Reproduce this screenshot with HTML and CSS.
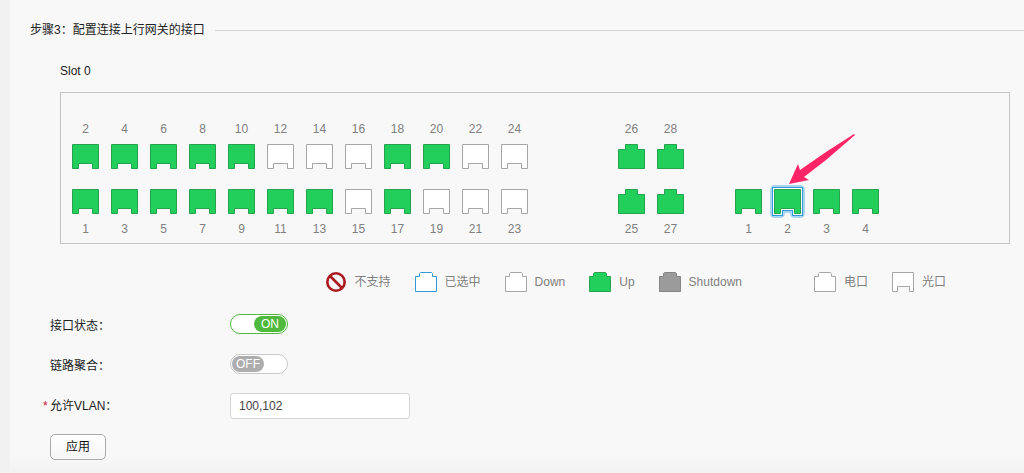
FILE: index.html
```html
<!DOCTYPE html>
<html lang="zh-CN">
<head>
  <meta charset="UTF-8">
  <meta name="viewport" content="width=device-width, initial-scale=1.0">
  <title>配置连接上行网关的接口</title>
  <link rel="stylesheet" href="styles.css">
</head>
<body>

  <!-- port shapes -->
  <svg class="sprite" aria-hidden="true">
    <symbol id="fiber" viewBox="0 0 27 25"><path d="M.5.5h26v24h-6v-5h-14v5h-6z"/></symbol>
    <symbol id="copper" viewBox="0 0 27 25"><path d="M.5 5.5h7v-5h12v5h7v19h-26z"/></symbol>
    <symbol id="fiber-sm" viewBox="0 0 22 20"><path d="M.5.5h21v19h-4v-5h-12v5h-5z"/></symbol>
    <symbol id="copper-sm" viewBox="0 0 22 20"><path d="M.5 4.5h4v-3l1-1h11l1 1v3h4v15h-21z"/></symbol>
  </svg>

  <main class="content">
    <h2 class="step-title">步骤3：配置连接上行网关的接口</h2>

    <section class="slot">
      <h3 class="slot-name">Slot 0</h3>
      <div class="panel">
        <div class="group">
          <div class="row">
            <button class="port up">2<svg><use href="#fiber"/></svg></button>
            <button class="port up">4<svg><use href="#fiber"/></svg></button>
            <button class="port up">6<svg><use href="#fiber"/></svg></button>
            <button class="port up">8<svg><use href="#fiber"/></svg></button>
            <button class="port up">10<svg><use href="#fiber"/></svg></button>
            <button class="port">12<svg><use href="#fiber"/></svg></button>
            <button class="port">14<svg><use href="#fiber"/></svg></button>
            <button class="port">16<svg><use href="#fiber"/></svg></button>
            <button class="port up">18<svg><use href="#fiber"/></svg></button>
            <button class="port up">20<svg><use href="#fiber"/></svg></button>
            <button class="port">22<svg><use href="#fiber"/></svg></button>
            <button class="port">24<svg><use href="#fiber"/></svg></button>
          </div>
          <div class="row">
            <button class="port up"><svg><use href="#fiber"/></svg>1</button>
            <button class="port up"><svg><use href="#fiber"/></svg>3</button>
            <button class="port up"><svg><use href="#fiber"/></svg>5</button>
            <button class="port up"><svg><use href="#fiber"/></svg>7</button>
            <button class="port up"><svg><use href="#fiber"/></svg>9</button>
            <button class="port up"><svg><use href="#fiber"/></svg>11</button>
            <button class="port up"><svg><use href="#fiber"/></svg>13</button>
            <button class="port"><svg><use href="#fiber"/></svg>15</button>
            <button class="port up"><svg><use href="#fiber"/></svg>17</button>
            <button class="port"><svg><use href="#fiber"/></svg>19</button>
            <button class="port"><svg><use href="#fiber"/></svg>21</button>
            <button class="port"><svg><use href="#fiber"/></svg>23</button>
          </div>
        </div>

        <div class="group combo">
          <div class="row">
            <button class="port up">26<svg><use href="#copper"/></svg></button>
            <button class="port up">28<svg><use href="#copper"/></svg></button>
          </div>
          <div class="row">
            <button class="port up"><svg><use href="#copper"/></svg>25</button>
            <button class="port up"><svg><use href="#copper"/></svg>27</button>
          </div>
        </div>

        <div class="group uplink">
          <div class="row">
            <button class="port up"><svg><use href="#fiber"/></svg>1</button>
            <button class="port up selected" aria-pressed="true">
              <svg viewBox="0 0 27 25">
                <path class="halo" d="M.5.5h26v24h-6v-5h-14v5h-6z"/>
                <path class="ring" d="M.5.5h26v24h-6v-5h-14v5h-6z"/>
                <path class="gap" d="M.5.5h26v24h-6v-5h-14v5h-6z"/>
                <path d="M.5.5h26v24h-6v-5h-14v5h-6z"/>
              </svg>2
            </button>
            <button class="port up"><svg><use href="#fiber"/></svg>3</button>
            <button class="port up"><svg><use href="#fiber"/></svg>4</button>
          </div>
          <svg class="arrow" viewBox="0 0 66 52" aria-hidden="true">
            <path d="M65 1 37 19 11 37 9 31 0 51l20-4-5-3 22-17L66 2z"/>
          </svg>
        </div>
      </div>

      <ul class="legend">
        <li>
          <svg class="forbid" viewBox="0 0 22 22"><circle cx="11" cy="11" r="8.7"/><path d="M5 5l12 12"/></svg>
          不支持
        </li>
        <li><svg class="chosen"><use href="#copper-sm"/></svg>已选中</li>
        <li><svg><use href="#copper-sm"/></svg>Down</li>
        <li><svg class="up"><use href="#copper-sm"/></svg>Up</li>
        <li><svg class="shutdown"><use href="#copper-sm"/></svg>Shutdown</li>
        <li class="type"><svg><use href="#copper-sm"/></svg>电口</li>
        <li><svg><use href="#fiber-sm"/></svg>光口</li>
      </ul>
    </section>

    <form class="settings">
      <div class="field">
        <label for="status">接口状态：</label>
        <span class="switch">
          <input type="checkbox" id="status" checked>
          <span class="knob"></span>
        </span>
      </div>
      <div class="field">
        <label for="trunk">链路聚合：</label>
        <span class="switch">
          <input type="checkbox" id="trunk">
          <span class="knob"></span>
        </span>
      </div>
      <div class="field required">
        <label for="vlan">允许VLAN：</label>
        <input class="text" type="text" id="vlan" value="100,102">
      </div>
      <button class="apply" type="button">应用</button>
    </form>
  </main>

</body>
</html>
```

FILE: styles.css
```css
:root {
  --bg: #f8f8f8;
  --side: #f1f1f1;
  --text: #222;
  --muted: #808080;
  --line: #c4c4c4;
  --up: #22cf5b;
  --up-border: #27a24e;
  --blue: #3399d4;
}

* {
  box-sizing: border-box;
}

body {
  margin: 0;
  min-height: 100vh;
  padding-left: 10px;
  background: var(--side);
  color: var(--text);
  font: 12px/16px "Liberation Sans", "Noto Sans CJK SC", sans-serif;
  overflow-x: hidden;
}

.content {
  min-height: 100vh;
  padding: 22px 0 12px 20px;
  background: linear-gradient(to top, #f2f2f2, var(--bg) 18px);
}

.sprite {
  position: absolute;
  width: 0;
  height: 0;
}

h2,
h3 {
  margin: 0;
  font-size: 12px;
  font-weight: normal;
}

.step-title {
  display: flex;
  align-items: center;
  gap: 10px;
}

.step-title::after {
  content: "";
  flex: 1;
  height: 1px;
  background: #d4d4d4;
}

.slot {
  margin: 25px 14px 0 30px;
}

/* port panel */
.panel {
  display: flex;
  align-items: flex-end;
  margin-top: 13px;
  padding: 28px 5px 6px;
  border: 1px solid var(--line);
}

.group {
  display: grid;
  gap: 20px;
}

.combo {
  margin-left: 78px;
}

.uplink {
  position: relative;
  margin-left: 39px;
}

.row {
  display: flex;
}

.port {
  display: flex;
  flex-direction: column;
  align-items: center;
  gap: 7px;
  width: 39px;
  padding: 0;
  border: none;
  background: none;
  color: var(--muted);
  font: inherit;
  cursor: pointer;
}

.port svg {
  width: 27px;
  height: 25px;
  overflow: visible;
}

.port svg,
.legend svg {
  fill: #fff;
  stroke: #a6a6a6;
}

.port.up svg,
.legend .up {
  fill: var(--up);
  stroke: var(--up-border);
}

.port .halo {
  stroke: #a9d5f1;
  stroke-width: 9;
  stroke-linejoin: round;
}

.port .ring {
  stroke: var(--blue);
  stroke-width: 5;
}

.port .gap {
  stroke: #fff;
  stroke-width: 3;
}

.arrow {
  position: absolute;
  left: 60px;
  bottom: 52px;
  width: 66px;
  height: 52px;
  fill: #ff2468;
  pointer-events: none;
}

/* legend */
.legend {
  display: flex;
  justify-content: flex-end;
  gap: 24px;
  margin: 27px 64px 0 0;
  padding: 0;
  list-style: none;
  color: var(--muted);
}

.legend li {
  display: flex;
  align-items: center;
  gap: 8px;
  height: 22px;
  white-space: nowrap;
}

.legend svg {
  width: 22px;
  height: 20px;
}

.legend .type {
  margin-left: 48px;
}

.legend .chosen {
  stroke: var(--blue);
}

.legend .shutdown {
  fill: #9b9b9b;
  stroke: #858585;
}

.legend .forbid {
  height: 22px;
  fill: none;
  stroke: #ab1a1f;
  stroke-width: 2.6;
}

/* settings */
.settings {
  padding: 20px 0 0 20px;
}

.field {
  display: flex;
  align-items: center;
  height: 22px;
  margin-bottom: 18px;
}

.field label {
  width: 180px;
  padding-top: 4px;
}

.field.required {
  height: 26px;
  margin-bottom: 15px;
}

.required label {
  padding-top: 0;
}

.required label::before {
  content: "*";
  float: left;
  margin-left: -7px;
  color: #c7102e;
}

.switch {
  position: relative;
  width: 58px;
  height: 20px;
}

.switch input {
  appearance: none;
  width: 58px;
  height: 20px;
  margin: 0;
  border: 1px solid #c8c8c8;
  border-radius: 10px;
  background: #fff;
  cursor: pointer;
}

.knob {
  position: absolute;
  top: 2px;
  left: 2px;
  width: 32px;
  border-radius: 8px;
  background: #adadad;
  color: #fff;
  text-align: center;
  pointer-events: none;
}

.knob::after {
  content: "OFF";
}

.switch input:checked {
  border-color: #50b83c;
}

.switch input:checked + .knob {
  left: 24px;
  background: #50b83c;
}

.switch input:checked + .knob::after {
  content: "ON";
}

.text {
  width: 180px;
  height: 26px;
  padding: 0 8px;
  border: 1px solid #d5d5d5;
  border-radius: 3px;
  background: #fff;
  color: #444;
  font: inherit;
}

.apply {
  width: 56px;
  height: 26px;
  border: 1px solid #aaa;
  border-radius: 5px;
  background: linear-gradient(#fff, #f6f6f6);
  color: #111;
  font: inherit;
  cursor: pointer;
}
```
